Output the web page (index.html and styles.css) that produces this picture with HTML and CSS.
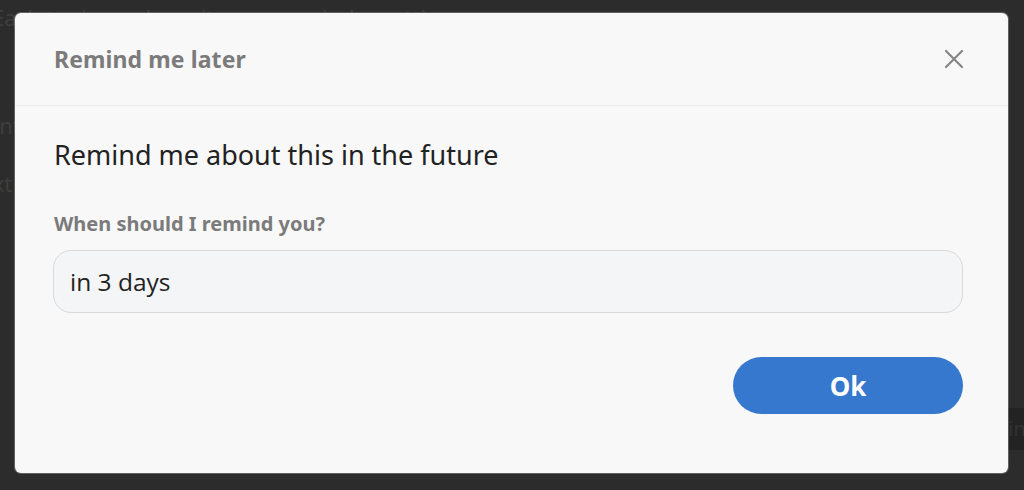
FILE: index.html
```html
<!DOCTYPE html>
<html>
<head>
<meta charset="utf-8">
<link rel="stylesheet" href="styles.css">
</head>
<body>
<div class="page">
  <p class="bg-line l1">Each topic can have its own reminder settings</p>
  <p class="bg-line l2">Content</p>
  <p class="bg-line l3">Text</p>
  <div class="bg-bar">Continue</div>
</div>
<div class="overlay">
  <div class="modal">
    <div class="modal-header">
      <h2 class="title">Remind me later</h2>
      <button class="close" aria-label="Close">
        <svg width="20" height="20" viewBox="0 0 20 20"><path d="M2 2 L18 18 M18 2 L2 18" stroke="#858585" stroke-width="2.2" stroke-linecap="round" fill="none"/></svg>
      </button>
    </div>
    <div class="modal-body">
      <p class="lead">Remind me about this in the future</p>
      <label class="label">When should I remind you?</label>
      <div class="input">in 3 days</div>
      <div class="actions">
        <button class="ok">Ok</button>
      </div>
    </div>
  </div>
</div>
</body>
</html>
```
FILE: styles.css
```css
html, body {
  margin: 0;
  padding: 0;
  height: 100%;
  background: #2c2c2c;
  overflow: hidden;
}
.page {
  position: relative;
  height: 490px;
  font-family: "Noto Sans", sans-serif;
  color: #3e3e3e;
}
.bg-line {
  margin: 0;
  font-size: 22px;
  position: absolute;
  left: -8px;
}
.l1 { top: 2px; }
.l2 { top: 110px; left: -28px; }
.l3 { top: 168px; left: -30px; }
.bg-bar {
  position: absolute;
  right: 0;
  top: 408px;
  width: 60px;
  height: 42px;
  background: #232323;
  color: #333;
  font-size: 20px;
  line-height: 42px;
}
.overlay {
  position: absolute;
  inset: 0;
  display: flex;
  align-items: flex-start;
  padding: 13px 0 0 15px;
}
.modal {
  width: 993px;
  height: 460px;
  background: #f8f8f8;
  border-radius: 6px;
  box-shadow: 0 0 0 1px rgba(255,255,255,0.25);
  font-family: "Noto Sans", sans-serif;
  display: flex;
  flex-direction: column;
}
.modal-header {
  height: 92px;
  border-bottom: 1px solid #ececec;
  display: flex;
  align-items: center;
  justify-content: space-between;
  padding: 0 44px 0 39px;
}
.title {
  margin: 0;
  font-size: 23px;
  font-weight: 700;
  color: #7b7b7b;
  letter-spacing: 0.1px;
}
.close {
  background: none;
  border: 0;
  padding: 0;
  width: 20px;
  height: 20px;
  display: flex;
  cursor: pointer;
}
.modal-body {
  padding: 33px 45px 0 38px;
  display: flex;
  flex-direction: column;
}
.lead {
  margin: 0 0 0 1px;
  font-size: 27px;
  line-height: 32px;
  color: #222;
}
.label {
  margin: 41px 0 0 1px;
  font-size: 20px;
  line-height: 24px;
  font-weight: 700;
  color: #7b7b7b;
}
.input {
  margin-top: 14px;
  height: 61px;
  border: 1px solid #d9d9d9;
  border-radius: 18px;
  background: #f4f5f6;
  display: flex;
  align-items: center;
  padding-left: 16px;
  font-family: "Open Sans", sans-serif;
  font-size: 24.5px;
  color: #222;
}
.actions {
  margin-top: 44px;
  display: flex;
  justify-content: flex-end;
}
.ok {
  width: 230px;
  height: 57px;
  border: 0;
  border-radius: 29px;
  background: #3578cd;
  color: #fff;
  font-family: "Noto Sans", sans-serif;
  font-size: 26px;
  font-weight: 700;
  cursor: pointer;
}
```
